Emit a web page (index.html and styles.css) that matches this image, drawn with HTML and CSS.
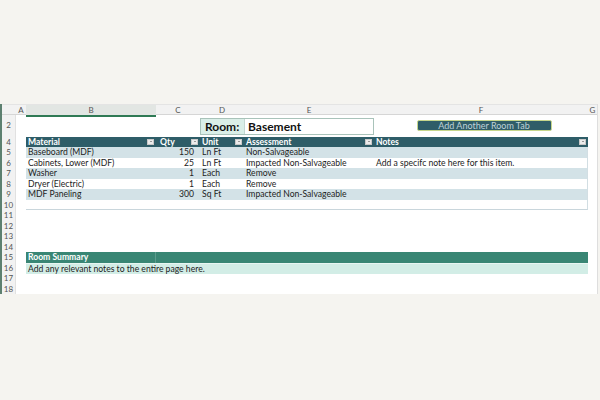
FILE: index.html
```html
<!DOCTYPE html>
<html lang="en">
<head>
    <meta charset="UTF-8">
    <meta name="viewport" content="width=device-width, initial-scale=1.0">
    <title>Room Inventory - Basement</title>
    <link rel="stylesheet" href="styles.css">
</head>
<body>
    <div class="sheet">
        <!-- column letters -->
        <div class="row col-heads">
            <div class="corner"></div>
            <div class="col-head">A</div>
            <div class="col-head selected">B</div>
            <div class="col-head">C</div>
            <div class="col-head">D</div>
            <div class="col-head">E</div>
            <div class="col-head">F</div>
            <div class="col-head">G</div>
        </div>

        <!-- room title + button -->
        <div class="row title-row">
            <div class="row-num">2</div>
            <div></div>
            <div></div>
            <div></div>
            <div class="room-title">
                <span class="room-label">Room:</span>
                <span class="room-name">Basement</span>
            </div>
            <div class="btn-cell"><button class="add-tab">Add Another Room Tab</button></div>
            <div></div>
        </div>

        <!-- item table -->
        <div class="row">
            <div class="row-num">4</div>
            <div></div>
            <div class="th">Material<span class="filter"></span></div>
            <div class="th">Qty<span class="filter"></span></div>
            <div class="th">Unit<span class="filter"></span></div>
            <div class="th">Assessment<span class="filter"></span></div>
            <div class="th th-last">Notes<span class="filter"></span></div>
            <div></div>
        </div>
        <div class="row">
            <div class="row-num">5</div>
            <div></div>
            <div class="td band">Baseboard (MDF)</div>
            <div class="td band num">150</div>
            <div class="td band">Ln Ft</div>
            <div class="td band">Non-Salvageable</div>
            <div class="td band td-last"></div>
            <div></div>
        </div>
        <div class="row">
            <div class="row-num">6</div>
            <div></div>
            <div class="td">Cabinets, Lower (MDF)</div>
            <div class="td num">25</div>
            <div class="td">Ln Ft</div>
            <div class="td">Impacted Non-Salvageable</div>
            <div class="td td-last">Add a specifc note here for this item.</div>
            <div></div>
        </div>
        <div class="row">
            <div class="row-num">7</div>
            <div></div>
            <div class="td band">Washer</div>
            <div class="td band num">1</div>
            <div class="td band">Each</div>
            <div class="td band">Remove</div>
            <div class="td band td-last"></div>
            <div></div>
        </div>
        <div class="row">
            <div class="row-num">8</div>
            <div></div>
            <div class="td">Dryer (Electric)</div>
            <div class="td num">1</div>
            <div class="td">Each</div>
            <div class="td">Remove</div>
            <div class="td td-last"></div>
            <div></div>
        </div>
        <div class="row">
            <div class="row-num">9</div>
            <div></div>
            <div class="td band">MDF Paneling</div>
            <div class="td band num">300</div>
            <div class="td band">Sq Ft</div>
            <div class="td band">Impacted Non-Salvageable</div>
            <div class="td band td-last"></div>
            <div></div>
        </div>
        <div class="row">
            <div class="row-num">10</div>
            <div></div>
            <div class="td foot"></div>
            <div class="td foot"></div>
            <div class="td foot"></div>
            <div class="td foot"></div>
            <div class="td foot td-last"></div>
            <div></div>
        </div>

        <div class="row"><div class="row-num">11</div></div>
        <div class="row"><div class="row-num">12</div></div>
        <div class="row"><div class="row-num">13</div></div>
        <div class="row"><div class="row-num">14</div></div>

        <!-- summary block -->
        <div class="row">
            <div class="row-num">15</div>
            <div></div>
            <div class="summary-head split">Room Summary</div>
            <div class="summary-head wide"></div>
            <div></div>
        </div>
        <div class="row">
            <div class="row-num">16</div>
            <div></div>
            <div class="summary-note split"><span>Add any relevant notes to the entire page here.</span></div>
            <div class="summary-note wide"></div>
            <div></div>
        </div>

        <div class="row"><div class="row-num">17</div></div>
        <div class="row"><div class="row-num">18</div></div>
    </div>
</body>
</html>
```

FILE: styles.css
```css
:root {
    --page-bg: #f5f4f0;
    --head-bg: #f2f2f2;
    --grid-line: #e1e1e1;
    --teal: #2e5d68;
    --band: #d3e2e7;
    --green: #398674;
    --mint: #d2ede6;
    --text: #222222;
}

* {
    margin: 0;
    padding: 0;
    box-sizing: border-box;
}

body {
    background: var(--page-bg);
    font-family: Lato, "Open Sans", Arial, sans-serif;
    color: var(--text);
    padding-top: 104px;
}

.sheet {
    width: 598px;
    background: #ffffff;
    border-left: 2px solid #5d8070;
    border-right: 1px solid #dedede;
}

/* every row shares the same column widths */
.row {
    display: grid;
    grid-template-columns: 14px 10px 130px 44px 44px 130px 214px 1fr;
    height: 10.5px;
    font-size: 8.6px;
    line-height: 10.5px;
}

.row-num {
    background: var(--head-bg);
    border-right: 1px solid var(--grid-line);
    color: #555;
    text-align: center;
    font-size: 8px;
}

/* column letter header */
.col-heads {
    height: 11px;
    line-height: 10px;
    background: var(--head-bg);
    border-top: 1px solid #e4e4e4;
    border-bottom: 1px solid #d6d6d6;
}

.col-head {
    text-align: center;
    color: #555;
    font-size: 8px;
}

.col-head.selected {
    background: #e2e6e3;
    border-bottom: 2px solid #2f7a55;
}

/* row 2 */
.title-row {
    height: 21.7px;
    line-height: 21.7px;
}

.title-row .row-num {
    line-height: 21.7px;
}

.room-title {
    grid-column: span 2;
    display: grid;
    grid-template-columns: 44px 1fr;
    margin: 2.5px 0 2.5px 0;
    border: 1px solid #a9c3ba;
    font-size: 12px;
    font-weight: bold;
    line-height: 15px;
    color: #111;
}

.room-label {
    background: #daefe8;
    padding-left: 4px;
    border-right: 1px solid #c3d8d1;
}

.room-name {
    padding-left: 3px;
}

.btn-cell {
    display: flex;
    justify-content: center;
    align-items: center;
    padding-left: 6px;
    padding-bottom: 1px;
}

.add-tab {
    width: 135px;
    height: 11px;
    background: #2f5d68;
    border: 1px solid #c6d68c;
    border-radius: 2px;
    color: #bfd2d8;
    font-family: Lato, "Open Sans", Arial, sans-serif;
    font-size: 9px;
    line-height: 9px;
}

/* table */
.th {
    position: relative;
    background: var(--teal);
    color: #ffffff;
    font-weight: bold;
    padding-left: 2px;
}

.th:nth-child(4) {
    padding-left: 4px;
}

.filter {
    position: absolute;
    right: 2px;
    top: 2px;
    width: 7px;
    height: 6.5px;
    background: #ececec;
    border: 1px solid #c8c8c8;
}

.filter::after {
    content: "";
    position: absolute;
    left: 1.5px;
    top: 1.5px;
    border-left: 1.5px solid transparent;
    border-right: 1.5px solid transparent;
    border-top: 1.5px solid #444;
}

.td {
    padding-left: 2px;
    white-space: nowrap;
}

.td.band {
    background: var(--band);
}

.td.num {
    text-align: right;
    padding-right: 6px;
}

.td-last {
    border-right: 1px solid #d2dee3;
}

.td.foot {
    border-bottom: 1px solid #c9d6dc;
}

/* summary */
.summary-head,
.summary-note {
    padding-left: 2px;
    white-space: nowrap;
}

.summary-head {
    background: var(--green);
    color: #ffffff;
    font-weight: bold;
}

.summary-note {
    background: var(--mint);
    border-top: 1px solid #e8f6f2;
}

.wide {
    grid-column: span 4;
}

.split {
    border-right: 1px solid rgba(255, 255, 255, 0.18);
    overflow: visible;
}

.summary-note span {
    position: relative;
    z-index: 1;
}
```
